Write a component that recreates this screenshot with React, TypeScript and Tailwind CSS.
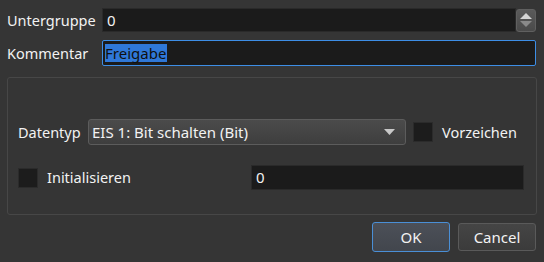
import React from 'react';

const font = { fontFamily: '"Noto Sans", "Open Sans", sans-serif' };

const Check: React.FC = () => (
  <span className="block w-[20px] h-[20px] bg-[#1c1c1c] border border-[#2b2b2b] shrink-0" />
);

export default function App() {
  return (
    <div
      className="w-[544px] h-[262px] bg-[#353535] text-[#f2f2f2] text-[14.5px] pl-[7px] pr-[8px] pt-[8px] overflow-hidden"
      style={font}
    >
      {/* Untergruppe */}
      <div className="flex items-center h-[24px]">
        <span className="w-[95px] shrink-0 leading-none">Untergruppe</span>
        <div className="flex-1 h-full bg-[#1b1b1b] border border-[#2a2a2a] flex items-center pl-[4px] leading-none text-[15px]">0</div>
        <div className="w-[20px] h-[23px] bg-gradient-to-b from-[#5a5a5a] to-[#4a4a4a] border border-[#606060] rounded-[3px] flex flex-col items-center justify-center gap-[2px]">
          <svg width="12" height="6" viewBox="0 0 12 6"><path d="M6 0L12 6H0z" fill="#d4d4d4" /></svg>
          <svg width="12" height="6" viewBox="0 0 12 6"><path d="M0 0H12L6 6z" fill="#8a8a8a" /></svg>
        </div>
      </div>

      {/* Kommentar */}
      <div className="flex items-center h-[26px] mt-[8px]">
        <span className="w-[95px] shrink-0 leading-none">Kommentar</span>
        <div className="flex-1 h-full bg-[#1b1b1b] border border-[#3d8ee6] rounded-[2px] flex items-center pl-[2px]">
          <span className="bg-[#2f78d8] text-[#101010] h-[18px] leading-[18px] pr-[1px] text-[15px]">Freigabe</span>
        </div>
      </div>

      {/* Group box */}
      <div className="mt-[11px] w-[530px] h-[138px] border border-[#474747] rounded-[3px] pl-[10px] pr-[12px] pt-[41px]">
        <div className="flex items-center h-[26px]">
          <span className="w-[70px] shrink-0 leading-none">Datentyp</span>
          <div className="w-[318px] h-full bg-gradient-to-b from-[#4b4b4b] to-[#3e3e3e] border border-[#5c5c5c] rounded-[3px] flex items-center justify-between pl-[3px] pr-[10px]">
            <span className="leading-none text-[15px]">EIS 1: Bit schalten (Bit)</span>
            <svg width="11" height="6" viewBox="0 0 11 6"><path d="M0 0H11L5.5 6z" fill="#c8c8c8" /></svg>
          </div>
          <div className="ml-[7px]"><Check /></div>
          <span className="ml-[9px] leading-none">Vorzeichen</span>
        </div>

        <div className="flex items-center h-[25px] mt-[20px]">
          <Check />
          <span className="ml-[9px] leading-none w-[204px]">Initialisieren</span>
          <div className="w-[273px] h-full bg-[#1b1b1b] border border-[#2a2a2a] flex items-center pl-[4px] leading-none text-[15px]">0</div>
        </div>
      </div>

      {/* Buttons */}
      <div className="flex justify-end items-center gap-[8px] mt-[7px]">
        <button className="w-[78px] h-[30px] bg-gradient-to-b from-[#4c5058] to-[#42464d] border border-[#4a8fd6] rounded-[3px] text-[15px] text-[#f2f2f2]">OK</button>
        <button className="w-[78px] h-[28px] bg-gradient-to-b from-[#454545] to-[#3b3b3b] border border-[#5a5a5a] rounded-[3px] text-[15px] text-[#f2f2f2]">Cancel</button>
      </div>
    </div>
  );
}
